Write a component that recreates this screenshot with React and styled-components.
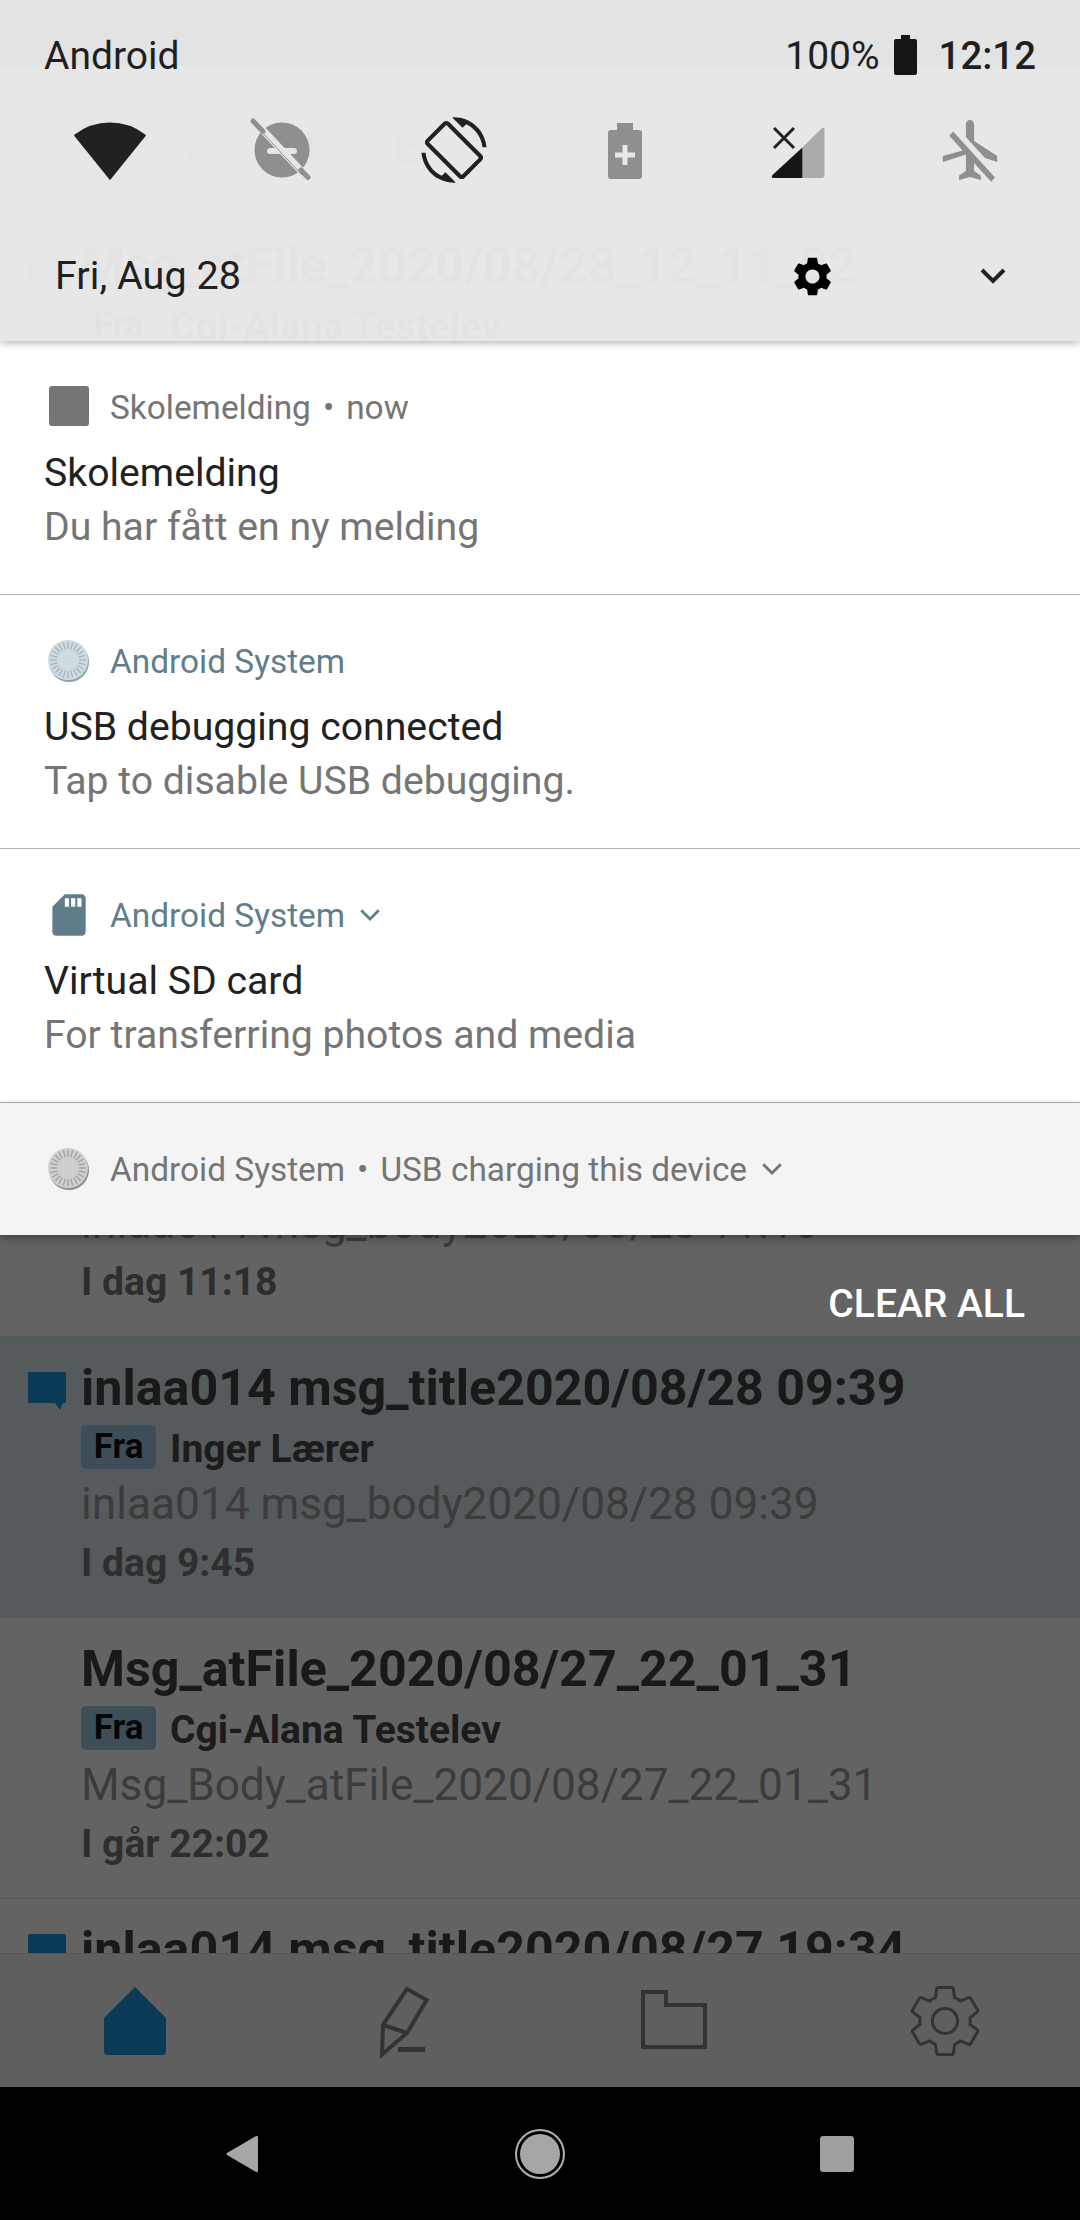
import React from 'react';
import styled, { createGlobalStyle } from 'styled-components';

const GlobalStyle = createGlobalStyle`
  html, body {
    margin: 0;
    padding: 0;
    background: #000;
    font-family: Roboto, "Liberation Sans", sans-serif;
  }
`;

const Screen = styled.div`
  position: relative;
  width: 1080px;
  height: 2220px;
  overflow: hidden;
  background: #000;
`;

/* the app behind the notification shade */
const AppArea = styled.div`
  position: relative;
  height: 2087px;
  display: flex;
  flex-direction: column;
  background: #fff;
`;

const AppStatus = styled.div`
  height: 66px;
  flex: none;
  background: #333;
`;

const AppTabs = styled.div`
  height: 149px;
  flex: none;
  display: flex;
  align-items: center;
  padding-left: 41px;
  font-size: 46px;
  font-weight: 700;
  color: #999;
  box-sizing: border-box;
  border-bottom: 1px solid #ddd;
`;

const AvatarTab = styled.div`
  width: 93px;
  height: 93px;
  margin-top: 14px;
  border-radius: 50%;
  background: #c2c2c2;
  color: #fff;
  display: flex;
  align-items: center;
  justify-content: center;
`;

const Tab = styled.div`
  margin-top: 14px;
  margin-left: ${(props) => props.gap}px;
  padding: ${(props) => (props.active ? '22px 40px' : '0')};
  background: ${(props) => (props.active ? '#e6eff5' : 'none')};
`;

const Funnel = styled.svg`
  margin-left: auto;
  margin-right: 30px;
  width: 76px;
  height: 76px;
  flex: none;
`;

const List = styled.div`
  flex: 1;
  overflow: hidden;
`;

const Row = styled.div`
  height: 281px;
  box-sizing: border-box;
  display: grid;
  grid-template-columns: 81px 1fr;
  padding-top: 23px;
  background: ${(props) => (props.unread ? '#dae7ec' : '#fff')};
  border-bottom: 1px solid ${(props) => (props.unread ? '#dae7ec' : '#dcdcdc')};
`;

const MarkerCol = styled.div`
  padding: 12px 0 0 28px;
`;

const RowTitle = styled.div`
  font-size: 50.2px;
  line-height: 56px;
  font-weight: 700;
  color: #424242;
  white-space: nowrap;
`;

const FromLine = styled.div`
  display: flex;
  align-items: center;
  margin-top: 9px;
  height: 44px;
`;

const FromTag = styled.span`
  width: 75px;
  height: 44px;
  border-radius: 5px;
  background: #a1cae4;
  color: #111;
  font-size: 35px;
  font-weight: 700;
  text-align: center;
  line-height: 44px;
`;

const Sender = styled.span`
  margin: 3px 0 0 14px;
  font-size: 39px;
  font-weight: 700;
  color: #484848;
`;

const RowBody = styled.div`
  margin-top: 9px;
  font-size: 44.2px;
  line-height: 52px;
  color: #9a9a9a;
  white-space: nowrap;
`;

const RowTime = styled.div`
  margin-top: 11px;
  font-size: 39px;
  line-height: 44px;
  font-weight: 700;
  color: #767676;
`;

const HiddenRows = styled.div`
  height: 560px;
`;

const BottomNav = styled.div`
  height: 134px;
  flex: none;
  box-sizing: border-box;
  display: grid;
  grid-template-columns: repeat(4, 1fr);
  align-items: center;
  justify-items: center;
  background: #f4f4f4;
  border-top: 1px solid #dcdcdc;
`;

const Scrim = styled.div`
  position: absolute;
  inset: 0;
  background: rgba(0, 0, 0, 0.61);
`;

const NavBar = styled.div`
  height: 133px;
  display: grid;
  grid-template-columns: 480px 120px 480px;
  align-items: center;
`;

const NavSlot = styled.div`
  display: flex;
  justify-content: ${(props) => props.justify};
  padding: ${(props) => props.pad};
`;

/* notification shade, over everything */
const Shade = styled.div`
  position: absolute;
  top: 0;
  left: 0;
  right: 0;
`;

const QuickPanel = styled.div`
  height: 341px;
  box-sizing: border-box;
  background: rgba(238, 238, 238, 0.95);
  box-shadow: 0 2px 8px rgba(0, 0, 0, 0.3);
  position: relative;
  color: #1f1f1f;
`;

const StatusRow = styled.div`
  display: flex;
  justify-content: space-between;
  align-items: center;
  padding: 34px 44px 0;
  height: 44px;
  font-size: 39px;
  line-height: 44px;
`;

const StatusRight = styled.div`
  display: flex;
  align-items: center;
`;

const Clock = styled.span`
  font-size: 38.4px;
  font-weight: 500;
  margin-left: 22px;
`;

const BatteryIcon = styled.svg`
  margin-left: 14px;
  width: 23px;
  height: 40px;
  margin-top: -3px;
`;

const QsRow = styled.div`
  display: grid;
  grid-template-columns: repeat(6, 172px);
  padding: 32px 0 0 24px;
  justify-items: center;
`;

const QsIcon = styled.svg`
  width: 80px;
  height: 80px;
  display: block;
`;

const DateRow = styled.div`
  display: flex;
  align-items: center;
  padding: 61px 0 0 55px;
  height: 50px;
  font-size: 39.6px;
  line-height: 50px;
`;

const DateText = styled.div`
  width: 734px;
`;

const Gear = styled.svg`
  width: 47px;
  height: 47px;
  flex: none;
`;

const DateChevron = styled.svg`
  width: 30px;
  height: 20px;
  margin-left: 142px;
  flex: none;
`;

const Notif = styled.div`
  height: 254px;
  box-sizing: border-box;
  padding: 44px 44px 0;
  background: #fff;
  border-bottom: 1px solid #b0b0b0;
`;

const NotifSmall = styled.div`
  height: 132px;
  box-sizing: border-box;
  padding: 0 44px;
  display: flex;
  align-items: center;
  background: #f4f4f4;
  box-shadow: 0 3px 8px rgba(0, 0, 0, 0.35);
  position: relative;
`;

const NotifHead = styled.div`
  display: flex;
  align-items: center;
  height: 44px;
  font-size: 33.4px;
  color: ${(props) => props.color};
  white-space: nowrap;
`;

const HeadIcon = styled.svg`
  width: 50px;
  height: 50px;
  margin-right: 16px;
  flex: none;
`;

const Dot = styled.span`
  margin: 0 12px;
`;

const HeadChevron = styled.svg`
  width: 24px;
  height: 16px;
  margin-left: 13px;
  flex: none;
`;

const NotifTitle = styled.div`
  margin-top: 19px;
  font-size: 39.2px;
  line-height: 50px;
  color: #212121;
`;

const NotifText = styled.div`
  margin-top: 5px;
  font-size: 39.2px;
  line-height: 48px;
  color: #757575;
`;

const ClearRow = styled.div`
  display: flex;
  justify-content: flex-end;
  padding: 47px 55px 0 0;
`;

const ClearAll = styled.span`
  font-size: 39px;
  line-height: 44px;
  font-weight: 500;
  color: #fff;
`;

const GEAR_PATH =
  'M19.14 12.94c.04-.3.06-.61.06-.94 0-.32-.02-.64-.07-.94l2.03-1.58c.18-.14.23-.41.12-.61l-1.92-3.32c-.12-.22-.37-.29-.59-.22l-2.39.96c-.5-.38-1.03-.7-1.62-.94l-.36-2.54c-.04-.24-.24-.41-.48-.41h-3.84c-.24 0-.43.17-.47.41l-.36 2.54c-.59.24-1.13.57-1.62.94l-2.39-.96c-.22-.08-.47 0-.59.22L2.74 8.87c-.12.21-.08.47.12.61l2.03 1.58c-.05.3-.07.62-.07.94s.02.64.07.94l-2.03 1.58c-.18.14-.23.41-.12.61l1.92 3.32c.12.22.37.29.59.22l2.39-.96c.5.38 1.03.7 1.62.94l.36 2.54c.05.24.24.41.48.41h3.84c.24 0 .44-.17.47-.41l.36-2.54c.59-.24 1.13-.56 1.62-.94l2.39.96c.22.08.47 0 .59-.22l1.92-3.32c.12-.22.07-.47-.12-.61l-2.01-1.58zM12 15.6c-1.98 0-3.6-1.62-3.6-3.6s1.62-3.6 3.6-3.6 3.6 1.62 3.6 3.6-1.62 3.6-3.6 3.6z';

const Marker = ({ kind }) => (
  <svg width="40" height="40" viewBox="0 0 40 40">
    {kind === 'mail' && (
      <g>
        <rect x="0" y="8" width="38" height="28" fill="#7fbde8" />
        <path d="M1 9 L19 22 L37 9" fill="none" stroke="#fff" strokeWidth="4" />
      </g>
    )}
    {kind === 'chat' && <path d="M1 0H37q1 0 1 1V30q0 1-1 1H35L32 38L27 31H1q-1 0-1-1V1q0-1 1-1z" fill="#1a95da" />}
    {kind === 'square' && <rect x="0" y="0" width="38" height="40" rx="2" fill="#1a95da" />}
  </svg>
);

const MessageRow = ({ unread, marker, title, sender, body, time }) => (
  <Row unread={unread}>
    <MarkerCol>{marker && <Marker kind={marker} />}</MarkerCol>
    <div>
      <RowTitle>{title}</RowTitle>
      <FromLine>
        <FromTag>Fra</FromTag>
        <Sender>{sender}</Sender>
      </FromLine>
      <RowBody>{body}</RowBody>
      <RowTime>{time}</RowTime>
    </div>
  </Row>
);

const SystemDisc = ({ face, rim, tick }) => {
  const ticks = [];
  for (let i = 0; i < 24; i++) {
    const a = (i * Math.PI) / 12;
    ticks.push(
      <line
        key={i}
        x1={24 + Math.cos(a) * 11}
        y1={24 + Math.sin(a) * 11}
        x2={24 + Math.cos(a) * 18}
        y2={24 + Math.sin(a) * 18}
        stroke={tick}
        strokeWidth="1.3"
      />
    );
  }
  return (
    <HeadIcon viewBox="0 0 50 50">
      <circle cx="25" cy="26" r="20" fill={rim} />
      <circle cx="24" cy="24" r="20" fill={face} />
      {ticks}
    </HeadIcon>
  );
};

const Chevron = ({ as: Comp, color, width }) => (
  <Comp viewBox="0 0 30 20">
    <path d="M4 4L15 15L26 4" fill="none" stroke={color} strokeWidth={width} />
  </Comp>
);

export default function App() {
  return (
    <Screen>
      <GlobalStyle />
      <AppArea>
        <AppStatus />
        <AppTabs>
          <AvatarTab>AL</AvatarTab>
          <Tab gap={51}>A</Tab>
          <Tab gap={88}>F</Tab>
          <Tab gap={26} active>E</Tab>
          <Funnel viewBox="0 0 76 76">
            <path d="M5 5H71L47 38V70L30 62V38Z" fill="#c4c4c4" />
          </Funnel>
        </AppTabs>
        <List>
          <MessageRow
            marker="mail"
            title="Msg_atFile_2020/08/28_12_11_02"
            sender="Cgi-Alana Testelev"
            body="Msg_Body_atFile_2020/08/28_12_11_02"
            time="I dag 12:11"
          />
          <HiddenRows />
          <MessageRow
            title="inlaa014 msg_title2020/08/28 11:18"
            sender="Inger Lærer"
            body="inlaa014 msg_body2020/08/28 11:18"
            time="I dag 11:18"
          />
          <MessageRow
            unread
            marker="chat"
            title="inlaa014 msg_title2020/08/28 09:39"
            sender="Inger Lærer"
            body="inlaa014 msg_body2020/08/28 09:39"
            time="I dag 9:45"
          />
          <MessageRow
            title="Msg_atFile_2020/08/27_22_01_31"
            sender="Cgi-Alana Testelev"
            body="Msg_Body_atFile_2020/08/27_22_01_31"
            time="I går 22:02"
          />
          <MessageRow marker="square" title="inlaa014 msg_title2020/08/27 19:34" />
        </List>
        <BottomNav>
          <svg width="80" height="80" viewBox="0 0 80 80">
            <path d="M40 6L71 37V70q0 4-4 4H13q-4 0-4-4V37Z" fill="#1a95da" />
          </svg>
          <svg width="80" height="80" viewBox="0 0 80 80">
            <path d="M42 8L61.6 19L42 52L17 73.5L18 44Z M18 44L42 52" fill="none" stroke="#838383" strokeWidth="4" />
            <rect x="33" y="66" width="27" height="5" fill="#838383" />
          </svg>
          <svg width="80" height="80" viewBox="0 0 80 80">
            <path d="M8 11H31V24H70V66H8Z" fill="none" stroke="#838383" strokeWidth="4" />
          </svg>
          <svg width="84" height="84" viewBox="0 0 24 24">
            <path d={GEAR_PATH} fill="none" stroke="#838383" strokeWidth="0.85" />
          </svg>
        </BottomNav>
        <Scrim />
      </AppArea>
      <NavBar>
        <NavSlot justify="flex-start" pad="0 0 0 226px">
          <svg width="32" height="38" viewBox="0 0 32 38">
            <path d="M30 1Q32 0 32 3V35Q32 38 30 37L1 20Q0 19 1 18Z" fill="#a6a6a6" />
          </svg>
        </NavSlot>
        <NavSlot justify="center">
          <svg width="50" height="50" viewBox="0 0 50 50">
            <circle cx="25" cy="25" r="24" fill="none" stroke="#b0b0b0" strokeWidth="2" />
            <circle cx="25" cy="25" r="20" fill="#a6a6a6" />
          </svg>
        </NavSlot>
        <NavSlot justify="flex-start" pad="0 0 0 220px">
          <svg width="34" height="36" viewBox="0 0 34 36">
            <rect width="34" height="36" rx="3" fill="#a0a0a0" />
          </svg>
        </NavSlot>
      </NavBar>
      <Shade>
        <QuickPanel>
          <StatusRow>
            <span>Android</span>
            <StatusRight>
              <span>100%</span>
              <BatteryIcon viewBox="0 0 23 40">
                <path d="M7 0H16V4H21Q23 4 23 6V38Q23 40 21 40H2Q0 40 0 38V6Q0 4 2 4H7Z" fill="#151515" />
              </BatteryIcon>
              <Clock>12:12</Clock>
            </StatusRight>
          </StatusRow>
          <QsRow>
            <QsIcon viewBox="0 0 24 24">
              <path
                d="M12.01 21.49L23.64 7c-.45-.34-4.93-4-11.64-4C5.28 3 .81 6.66.36 7l11.63 14.49.01.01.01-.01z"
                fill="#212121"
                transform="translate(1.2 1.3) scale(.9)"
                stroke="#212121"
                strokeWidth=".6"
                strokeLinejoin="round"
              />
            </QsIcon>
            <QsIcon viewBox="0 0 80 80">
              <circle cx="40" cy="40" r="27.5" fill="#8f8f8f" />
              <rect x="25" y="38" width="30" height="6" rx="3" fill="#e7e7e7" />
              <path d="M17 16L63 65" stroke="#e7e7e7" strokeWidth="7" />
              <path d="M11 11L21 21.5M59 60L66 67.5" stroke="#8f8f8f" strokeWidth="5" strokeLinecap="round" />
              <path d="M18 20L60 65" stroke="#8f8f8f" strokeWidth="1" />
            </QsIcon>
            <QsIcon viewBox="-2.7 -2.7 29.4 29.4">
              <path
                d="M16.48 2.52c3.27 1.55 5.61 4.72 5.97 8.48h1.5C23.44 4.84 18.29 0 12 0l-.66.03 3.81 3.81 1.33-1.32zm-6.25-.77c-.59-.59-1.54-.59-2.12 0L1.75 8.11c-.59.59-.59 1.54 0 2.12l12.02 12.02c.59.59 1.54.59 2.12 0l6.36-6.36c.59-.59.59-1.54 0-2.12L10.23 1.75zm4.6 19.44L2.81 9.17l6.36-6.36 12.02 12.02-6.36 6.36zm-7.31.29C4.25 19.94 1.91 16.76 1.55 13H.05C.56 19.16 5.71 24 12 24l.66-.03-3.81-3.81-1.33 1.32z"
                fill="#212121"
              />
            </QsIcon>
            <QsIcon viewBox="0 0 80 80">
              <path d="M31 13H47V20H53Q56 20 56 23V66Q56 69 53 69H25Q22 69 22 66V23Q22 20 25 20H31Z" fill="#8f8f8f" />
              <path d="M39 35V55M29 45H49" stroke="#e7e7e7" strokeWidth="5" />
            </QsIcon>
            <QsIcon viewBox="0 0 80 80">
              <path d="M44.4 37.6L63 19Q66.5 15.5 66.5 20V65Q66.5 68 63.5 68H44.4Z" fill="#ababab" />
              <path d="M44.4 37.6V68H16Q12 68 15 64.5Z" fill="#151515" />
              <path d="M16 18L36 38M36 18L16 38" stroke="#222" strokeWidth="3" />
            </QsIcon>
            <QsIcon viewBox="-2.7 -1.35 29.4 26.7" preserveAspectRatio="none">
              <path
                d="M10.5 7.67V3.5c0-.83.67-1.5 1.5-1.5s1.5.67 1.5 1.5V9l8.5 5v2l-4.49-1.32-7.01-7.01zm9.28 14.94l1.41-1.41-7.69-7.69-7.69-7.69-1.41 1.41 4.9 4.9L2 14v2l8.5-2.5V19L8 20.5V22l4-1 4 1v-1.5L13.5 19v-2.67l6.28 6.28z"
                fill="#8f8f8f"
              />
            </QsIcon>
          </QsRow>
          <DateRow>
            <DateText>Fri, Aug 28</DateText>
            <Gear viewBox="0 0 24 24">
              <path d={GEAR_PATH} fill="#000" />
            </Gear>
            <Chevron as={DateChevron} color="#212121" width="4" />
          </DateRow>
        </QuickPanel>
        <Notif>
          <NotifHead color="#757575">
            <HeadIcon viewBox="0 0 50 50">
              <rect x="5" y="4" width="40" height="40" rx="3" fill="#757575" />
            </HeadIcon>
            Skolemelding<Dot>•</Dot>now
          </NotifHead>
          <NotifTitle>Skolemelding</NotifTitle>
          <NotifText>Du har fått en ny melding</NotifText>
        </Notif>
        <Notif>
          <NotifHead color="#607d8b">
            <SystemDisc face="#cfdbe0" rim="#90a4ae" tick="#a3b5be" />
            Android System
          </NotifHead>
          <NotifTitle>USB debugging connected</NotifTitle>
          <NotifText>Tap to disable USB debugging.</NotifText>
        </Notif>
        <Notif>
          <NotifHead color="#607d8b">
            <HeadIcon viewBox="0 0 24 24">
              <path
                d="M18 2h-8L4.02 8 4 20c0 1.1.9 2 2 2h12c1.1 0 2-.9 2-2V4c0-1.1-.9-2-2-2zm-6 6h-2V4h2v4zm3 0h-2V4h2v4zm3 0h-2V4h2v4z"
                fill="#607d8b"
              />
            </HeadIcon>
            Android System
            <Chevron as={HeadChevron} color="#607d8b" width="3.4" />
          </NotifHead>
          <NotifTitle>Virtual SD card</NotifTitle>
          <NotifText>For transferring photos and media</NotifText>
        </Notif>
        <NotifSmall>
          <NotifHead color="#757575">
            <SystemDisc face="#cfcfcf" rim="#8f8f8f" tick="#a0a0a0" />
            Android System<Dot>•</Dot>USB charging this device
            <Chevron as={HeadChevron} color="#757575" width="3.4" />
          </NotifHead>
        </NotifSmall>
        <ClearRow>
          <ClearAll>CLEAR ALL</ClearAll>
        </ClearRow>
      </Shade>
    </Screen>
  );
}
